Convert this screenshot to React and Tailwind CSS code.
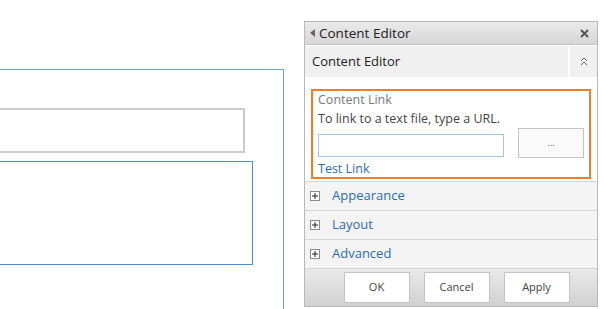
import React from 'react'

const font = { fontFamily: '"Open Sans", "Noto Sans", sans-serif' }

function PlusBox() {
  return (
    <span className="flex h-[10px] w-[10px] items-center justify-center border border-[#8a8a8a] bg-white">
      <svg width="6" height="6" viewBox="0 0 6 6">
        <path d="M0 3h6M3 0v6" stroke="#222" strokeWidth="1" />
      </svg>
    </span>
  )
}

function SectionRow({ label }) {
  return (
    <div className="flex h-[29px] items-center border-b border-[#d6d6d6] bg-[#f4f4f4] pl-[5px]">
      <PlusBox />
      <span className="ml-[12px] text-[13px] text-[#2a6cb0]">{label}</span>
    </div>
  )
}

function FooterButton({ children }) {
  return (
    <button className="flex h-[31px] w-[66px] items-center justify-center border border-[#c4c4c4] bg-white text-[11px] text-[#444]">
      {children}
    </button>
  )
}

export default function App() {
  return (
    <div className="flex h-[309px] w-[604px] flex-col overflow-hidden bg-white" style={font}>
      <div className="mx-0 mt-[1px] h-[1px] w-[600px] bg-[#e4e4e4]" />
      <div className="flex flex-1">
        {/* page canvas */}
        <div className="w-[304px] shrink-0 pt-[68px]">
          <div className="ml-[-2px] h-[260px] w-[286px] border-t border-r border-[#6fa3d6] pt-[38px]">
            <div className="ml-[-2px] h-[45px] w-[249px] border-2 border-[#cbcbcb]" />
            <div className="ml-[-2px] mt-[8px] h-[104px] w-[257px] border border-[#4f8cc9]" />
          </div>
        </div>

        {/* tool pane */}
        <div className="mt-[20px] flex h-[286px] w-[294px] flex-col border border-[#b8b8b8] bg-white">
          <div className="flex h-[23px] items-center border-b border-[#c4c4c4] bg-gradient-to-b from-[#eaeaea] to-[#d6d6d6] pl-[5px] pr-[8px]">
            <svg width="5" height="8" viewBox="0 0 5 8">
              <path d="M5 0L0 4l5 4z" fill="#666" />
            </svg>
            <span className="ml-[4px] flex-1 text-[13.5px] text-[#222]">Content Editor</span>
            <svg width="9" height="9" viewBox="0 0 9 9">
              <path d="M1 1l7 7M8 1l-7 7" stroke="#555" strokeWidth="2" />
            </svg>
          </div>

          <div className="flex h-[32px] bg-white pt-[1px]">
            <div className="flex flex-1 items-center bg-[#f0f0f0] pl-[7px] text-[13px] text-[#222]">Content Editor</div>
            <div className="ml-[2px] flex w-[27px] items-center justify-center bg-[#f0f0f0]">
              <svg width="8" height="9" viewBox="0 0 8 9">
                <path d="M1 4l3-3 3 3M1 8l3-3 3 3" stroke="#666" strokeWidth="1" fill="none" />
              </svg>
            </div>
          </div>

          <div className="px-[6px] pt-[12px] pb-[2px]">
            <div className="h-[90px] border-2 border-[#f07d28] px-[5px]">
              <div className="mt-[1px] text-[12.5px] leading-[16px] text-[#7a7a7a]">Content Link</div>
              <div className="mt-[3px] text-[12.5px] leading-[16px] text-[#444]">To link to a text file, type a URL.</div>
              <div className="mt-[1px] flex items-center">
                <div className="mt-[5px] h-[23px] w-[187px] border border-[#a9c4e0] bg-white" />
                <div className="ml-[14px] flex h-[30px] w-[66px] items-center justify-center border border-[#c4c4c4] bg-[#fafafa] text-[9px] text-[#555]">
                  ...
                </div>
              </div>
              <div className="mt-[3px] text-[12.5px] leading-[16px] text-[#2a6cb0]">Test Link</div>
            </div>
          </div>

          <div className="border-t border-[#d6d6d6]">
            <SectionRow label="Appearance" />
            <SectionRow label="Layout" />
            <SectionRow label="Advanced" />
          </div>

          <div className="flex flex-1 items-center justify-center gap-[14px] bg-gradient-to-b from-[#e9e9e9] to-[#d2d2d2] pl-[11px]">
            <FooterButton>OK</FooterButton>
            <FooterButton>Cancel</FooterButton>
            <FooterButton>Apply</FooterButton>
          </div>
        </div>
      </div>
    </div>
  )
}
